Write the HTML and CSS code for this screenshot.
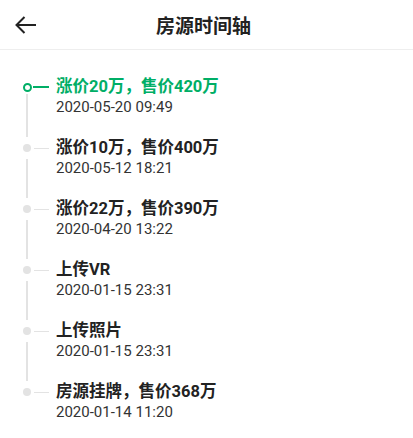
FILE: index.html
```html
<!DOCTYPE html>
<html lang="zh-CN">
<head>
  <meta charset="UTF-8" />
  <title>房源时间轴</title>
  <link rel="stylesheet" href="styles.css">
</head>
<body>

  <div class="header">
    <a class="back" href="#">
      <svg width="22" height="18" viewBox="0 0 22 18">
        <path d="M21 9H1.5M9.5 1L1.5 9l8 8" fill="none" stroke="#222" stroke-width="2"/>
      </svg>
    </a>
    <h1>房源时间轴</h1>
    <span></span>
  </div>

  <ul class="timeline">
    <li class="item current">
      <div class="marker">
        <div class="head"><span class="dot"></span><span class="dash"></span></div>
        <div class="line"></div>
      </div>
      <div class="info">
        <h3>涨价20万，售价420万</h3>
        <p>2020-05-20 09:49</p>
      </div>
    </li>

    <li class="item">
      <div class="marker">
        <div class="head"><span class="dot"></span><span class="dash"></span></div>
        <div class="line"></div>
      </div>
      <div class="info">
        <h3>涨价10万，售价400万</h3>
        <p>2020-05-12 18:21</p>
      </div>
    </li>

    <li class="item">
      <div class="marker">
        <div class="head"><span class="dot"></span><span class="dash"></span></div>
        <div class="line"></div>
      </div>
      <div class="info">
        <h3>涨价22万，售价390万</h3>
        <p>2020-04-20 13:22</p>
      </div>
    </li>

    <li class="item">
      <div class="marker">
        <div class="head"><span class="dot"></span><span class="dash"></span></div>
        <div class="line"></div>
      </div>
      <div class="info">
        <h3>上传VR</h3>
        <p>2020-01-15 23:31</p>
      </div>
    </li>

    <li class="item">
      <div class="marker">
        <div class="head"><span class="dot"></span><span class="dash"></span></div>
        <div class="line"></div>
      </div>
      <div class="info">
        <h3>上传照片</h3>
        <p>2020-01-15 23:31</p>
      </div>
    </li>

    <li class="item">
      <div class="marker">
        <div class="head"><span class="dot"></span><span class="dash"></span></div>
      </div>
      <div class="info">
        <h3>房源挂牌，售价368万</h3>
        <p>2020-01-14 11:20</p>
      </div>
    </li>
  </ul>

</body>
</html>
```

FILE: styles.css
```css
:root {
  --green: #00ae66;
  --text: #222;
  --line: #e3e3e3;
}

body {
  margin: 0;
  background: #fff;
  color: var(--text);
  font-family: Roboto, "Noto Sans CJK SC", sans-serif;
}

.header {
  height: 49px;
  border-bottom: 1px solid #eeeeee;
  display: grid;
  grid-template-columns: 1fr auto 1fr;
  align-items: center;
  padding: 0 15px;
}

.back {
  display: flex;
  width: 22px;
  height: 18px;
}

.header h1 {
  margin: 0;
  font-size: 19px;
  font-weight: bold;
  color: var(--text);
  padding-right: 6px;
}

.timeline {
  list-style: none;
  margin: 0;
  padding: 26px 0 0;
}

.item {
  display: flex;
  padding-bottom: 21px;
}

.item:last-child {
  padding-bottom: 0;
}

.marker {
  width: 56px;
  flex-shrink: 0;
  display: flex;
  flex-direction: column;
  padding-left: 23px;
  box-sizing: border-box;
  margin-bottom: -21px;
}

.item:last-child .marker {
  margin-bottom: 0;
}

.head {
  height: 22px;
  display: flex;
  align-items: center;
}

.dot {
  width: 8px;
  height: 8px;
  border-radius: 50%;
  background: var(--line);
  flex-shrink: 0;
}

.dash {
  width: 15px;
  height: 1px;
  margin-left: 3px;
  background: var(--line);
}

.line {
  flex: 1;
  width: 2px;
  margin-left: 3px;
  background: var(--line);
}

.current .dot {
  width: 9px;
  height: 9px;
  box-sizing: border-box;
  border: 2px solid var(--green);
  background: #fff;
}

.current .dash {
  width: 16px;
  height: 2px;
  margin-left: 1px;
  background: var(--green);
}

.current .line {
  margin-top: -4px;
}

.info h3 {
  margin: 0;
  font-size: 16.5px;
  line-height: 22px;
  font-weight: bold;
  color: var(--text);
}

.current .info h3 {
  color: var(--green);
}

.info p {
  margin: 0;
  font-size: 15px;
  line-height: 18px;
  color: #333;
}
```
